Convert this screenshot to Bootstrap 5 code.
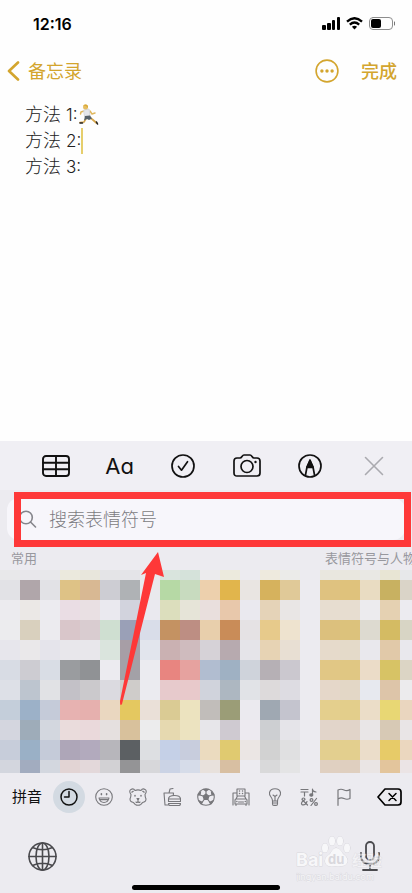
<!DOCTYPE html>
<html lang="zh-CN">
<head>
<meta charset="utf-8">
<meta name="viewport" content="width=device-width, initial-scale=1">
<title>备忘录</title>
<link href="https://cdn.jsdelivr.net/npm/bootstrap@5.3.0/dist/css/bootstrap.min.css" rel="stylesheet">
<style>
body{font-family:"Inter","Noto Sans CJK SC",sans-serif;background:#ecebf0;color:#333;overflow-x:hidden}
svg{display:block;flex:none;fill:none;stroke:currentColor;stroke-linecap:round;stroke-linejoin:round}
button,a.back{background:none;border:0;padding:0;color:inherit;text-decoration:none}
.phone{min-height:100vh;position:relative;overflow:hidden}
.note{background:#fefefe;height:441px}
.status{height:47px;padding:0 16px 0 33px;color:#000}
.signals{gap:6px}
.clock{font-size:16px;font-weight:600;line-height:20px}
.topbar{height:48px;padding:0 15px 0 7px;color:#d3a52e;font-size:18px}
.finish{font-weight:500;color:#d3a52e;margin-left:22px}
.memo{padding:7px 25px;font-size:18px;line-height:26px;font-weight:300;color:#222}
.memo span{font-size:17px}
.caret{width:2px;height:26px;background:#e6ce6c}
.tools{background:#f0eff4;height:49px;color:#111;padding:0 21px 0 39px}
.tools button{width:34px;display:flex;justify-content:center}
.tools .aa{font-size:22px;line-height:30px;font-feature-settings:"cv11"}
.tools .closer{color:#aaaaaf}
.searchrow{padding:8px 7px 8px 7px}
.searchbox{background:#f7f6fb;border-radius:12px;height:42px;padding-left:11px;gap:11px;color:#85858b}
.searchbox input{border:0;background:none;outline:0;font-size:18px;width:100%;min-width:0;color:#333;padding:0;font-weight:300}
.searchbox input::placeholder{color:#7c7c82;opacity:1}
.heads{height:22px;padding-left:11px;font-size:13px;line-height:20px;color:#98989e;white-space:nowrap;overflow:hidden}
.heads span+span{width:87px}
.mosaic{display:grid;grid-template-columns:repeat(21,20px);grid-template-rows:10px repeat(9,20px) 13px;overflow:hidden}
.cats{height:48px;padding:0 10px 0 12px;color:#77777b}
.cats button{display:flex;justify-content:center;align-items:center}
.groups{margin:0 16px 0 10px}
.groups button{flex:1 1 0}
.cats .ime{font-size:15px;color:#111;line-height:20px}
.recent{width:32px;height:32px;border-radius:50%;background:#d3dae2;color:#111;display:flex;align-items:center;justify-content:center}
.bottom{height:70px;padding:0 29px 0 28px;color:#4a4a4e}
.homebar{width:148px;height:5px;border-radius:3px;background:#000;margin:-6px auto 0}
.frame{position:absolute;left:14px;right:1px;top:492px;height:55px;border:7px solid #fe3838;pointer-events:none}
.arrow{position:absolute;left:119px;top:551px;pointer-events:none}
.stamp{position:absolute;right:24px;top:836px;pointer-events:none}
</style>
<script src="https://cdn.jsdelivr.net/npm/bootstrap@5.3.0/dist/js/bootstrap.bundle.min.js"></script>
</head>
<body>
<div class="phone">
<main class="note">
  <div class="status d-flex align-items-center justify-content-between">
    <span class="clock">12:16</span>
    <div class="signals d-flex align-items-center">
      <svg width="18" height="13" stroke="none"><g fill="#000" stroke="none"><rect y="8" width="4" height="5" rx="1"/><rect x="5" y="6" width="4" height="7" rx="1"/><rect x="10" y="3" width="3" height="10" rx="1"/><rect x="15" y="0" width="3" height="13" rx="1"/></g></svg>
      <svg width="17" height="13" viewBox="0 0 17 13" stroke-width="2.3"><path d="M1 4.6Q8.500-2.200 16 4.600M3.800 7.600Q8.500 3.400 13.200 7.600" stroke-linecap="butt"/><path d="M5.900 9.800Q8.500 7.700 11.100 9.800L8.500 12.400Z" fill="#000" stroke="none"/></svg>
      <svg width="27" height="13" viewBox="0 0 27 13"><rect x=".5" y=".5" width="23" height="12" rx="3.500" stroke="#8d8d8d"/><rect x="2" y="2" width="10" height="9" rx="2" fill="#000" stroke="none"/><path d="M25.500 5v3" stroke="#777"/></svg>
    </div>
  </div>
  <div class="topbar d-flex align-items-center">
    <a href="#" class="back d-flex align-items-center gap-2 me-auto"><svg width="13" height="20" viewBox="0 0 13 20" stroke-width="2.600"><path d="M11 1.500 2 10l9 8.500"/></svg>备忘录</a>
    <button aria-label="更多"><svg width="24" height="24" viewBox="0 0 24 24" stroke-width="1.600"><circle cx="12" cy="12" r="10.900"/><g fill="currentColor" stroke="none"><circle cx="6.900" cy="12" r="1.700"/><circle cx="12" cy="12" r="1.700"/><circle cx="17.100" cy="12" r="1.700"/></g></svg></button>
    <button class="finish">完成</button>
  </div>
  <div class="memo">
    <div class="d-flex align-items-center">方法&nbsp;<span>1:</span>
      <svg width="21" height="22" viewBox="0 0 21 22"><path d="m9 13-3 5-4 .5" stroke="#d6a64c" stroke-width="1.600"/><path d="m11 13 3.500 2.500 4 3.500" stroke="#d6a64c" stroke-width="1.800"/><path d="m6 7-3 1-.5 2M12 7l2 3 3-1" stroke="#e0b75e" stroke-width="1.500"/><path d="m6 6 5-1 1 7-5 1Z" fill="#e4e6eb" stroke="#d4d6da"/><path d="m7 12 5-.5 2 3-3 1.500-2-1-3 1.500Z" fill="#56616a" stroke="none"/><circle cx="7.500" cy="3" r="2.500" fill="#e5bd62" stroke="none"/><path d="M5 1.500Q8-.5 10 2v2L8 2Z" fill="#d9a935" stroke="none"/><path d="M2 19h2.500m14-1 1 2" stroke="#222" stroke-width="1.600"/></svg></div>
    <div class="d-flex align-items-center">方法&nbsp;<span>2:</span><i class="caret"></i></div>
    <div class="d-flex align-items-center">方法&nbsp;<span>3:</span></div>
  </div>
</main>
<section>
  <div class="tools d-flex align-items-center justify-content-between">
    <button aria-label="表格"><svg width="28" height="22" viewBox="0 0 28 22" stroke-width="1.900"><rect x="1" y="1" width="26" height="20" rx="3"/><path d="M1 7.700h26M1 14.300h26M14 1v20"/></svg></button>
    <button class="aa">Aa</button>
    <button aria-label="清单"><svg width="24" height="24" viewBox="0 0 24 24" stroke-width="1.700"><circle cx="12" cy="12" r="11"/><path d="m7.500 12.500 3 3.700 6-8.500"/></svg></button>
    <button aria-label="相机"><svg width="28" height="23" viewBox="0 0 28 23" stroke-width="1.700"><path d="M4 4h3c2 0 2-3 4-3h6c2 0 2 3 4 3h3q3 0 3 3v12q0 3-3 3H4q-3 0-3-3V7q0-3 3-3Z"/><circle cx="14" cy="12.500" r="6"/><circle cx="22.500" cy="8" r="1.200" fill="currentColor" stroke="none"/></svg></button>
    <button aria-label="标记"><svg width="24" height="24" viewBox="0 0 24 24" stroke-width="1.700"><circle cx="12" cy="12" r="11"/><path d="m7.500 21 1.500-8 3-6 3 6 1.500 8"/><path d="m12 6 3 7.500H9Z" fill="currentColor"/></svg></button>
    <button class="closer" aria-label="关闭"><svg width="20" height="20" viewBox="0 0 20 20" stroke-width="1.600"><path d="m1.500 1.500 17 17m0-17-17 17"/></svg></button>
  </div>
  <div class="searchrow"><label class="searchbox d-flex align-items-center">
    <svg width="20" height="20" viewBox="0 0 20 20" stroke-width="1.600"><circle cx="8" cy="8.500" r="6.300"/><path d="m12.500 13 5 5"/></svg>
    <input type="text" placeholder="搜索表情符号" aria-label="搜索表情符号"></label></div>
  <div class="heads d-flex justify-content-between"><span>常用</span><span>表情符号与人物</span></div>
  <div class="mosaic" id="mosaic"></div>
  <div class="cats d-flex align-items-center">
    <button class="ime">拼音</button>
    <div class="groups d-flex align-items-center flex-fill">
    <button aria-label="常用"><span class="recent"><svg width="18" height="18" viewBox="0 0 18 18" stroke-width="1.500"><circle cx="9" cy="9" r="8"/><path d="M9 3.500V9H4.500"/></svg></span></button>
    <button aria-label="表情"><svg width="18" height="18" viewBox="0 0 18 18" stroke-width="1.100"><circle cx="9" cy="9" r="8.300"/><path d="M4 10h10q-1 4.500-5 4.500T4 10Zm.7 1.600h8.600"/><path d="M6.400 5.800v.8m5.200-.8v.8" stroke-width="1.600"/></svg></button>
    <button aria-label="动物"><svg width="18" height="18" viewBox="0 0 18 18" stroke-width="1.100"><path d="M2 6.500Q-.5 3 2 1.400 4.500 0 6 2.500q3-1.200 6 0Q13.500 0 16 1.400 18.500 3 16 6.500q0 2 1 4.500 0 3-3.500 3.500Q12 17.300 9 17.300T4.500 14.500Q1 14 1 11q1-2.500 1-4.500ZM3 4.500Q3 3 4.500 3.200M15 4.500Q15 3 13.500 3.200"/><path d="M8 10.500h2L9 12Zm1 1.500v1.500m-2 .5q1 1 2-.3 1 1.300 2 .3"/><path d="M6 7.500v.5m6-.5V8" stroke-width="1.500"/></svg></button>
    <button aria-label="食物"><svg width="18" height="18" viewBox="0 0 18 18" stroke-width="1.100"><path d="M5 17H2L1 5h9.500L10.300 7M6 5l1-4 3-.5M5.500 11q0-3.500 6-3.500t6 3.500ZM5.500 13.500h12M5.500 15.500h12q0 2-1.500 2H7q-1.500 0-1.500-2ZM5.500 11v2.500m12-2.500v2.500"/></svg></button>
    <button aria-label="活动"><svg width="18" height="18" viewBox="0 0 18 18" stroke-width="1.100"><circle cx="9" cy="9" r="8.300"/><path d="m9 6 2.900 2.100-1.100 3.400H7.200L6.100 8.100Z" fill="currentColor"/><path d="M9 6V3M6.100 8.100 3 7m4.200 4.500-2 2.700m5.600-2.700 2 2.700m-.9-6.100L15 7"/><path d="M6.300 1.300 9 3l2.700-1.700ZM1 7l2 0 .7-3.300ZM1.500 12.500l3.700 1.700-1 2Zm15 0-3.700 1.700 1 2ZM17 7h-2l-.7-3.300Z" fill="currentColor"/></svg></button>
    <button aria-label="旅行"><svg width="18" height="18" viewBox="0 0 18 18" stroke-width="1.100"><path d="M1 17V5h4V1h8v4h4v12M5 5v3M13 5v3M4 11l1.500-3h7l1.500 3M3 12q0-1 1-1h10q1 0 1 1v4H3Zm1 4v1.500M14 16v1.500M6.500 14h5"/><path d="M7.500 3h.1m2.900 0h.1M7.500 5.500h.1m2.900 0h.1M4.800 13.500h.1m8.300 0h.1" stroke-width="1.400"/></svg></button>
    <button aria-label="物品"><svg width="18" height="18" viewBox="0 0 18 18" stroke-width="1.100"><path d="M6.500 13q0-2-1.500-4Q3 6.500 3.500 4.500 4.500.7 9 .7t5.500 3.800Q15 6.500 13 9q-1.500 2-1.500 4ZM6.500 13v3q0 1.400 1.400 1.400h2.200q1.400 0 1.400-1.400v-3M6.500 15h5M7 7l2 1.500L11 7M9 8.500V13"/></svg></button>
    <button aria-label="符号"><svg width="18" height="18" viewBox="0 0 18 18" stroke-width="1.200"><path d="M1 1.500h7M1 4h7M4.500 4v4M12.500 7V1q0 2.500 3.500 3"/><ellipse cx="11.300" cy="7" rx="1.500" ry="1.200" fill="currentColor"/><path d="M7.500 17 2 11.500Q2 10 3.500 10T5 11.500L2 14q-1 1.500 0 2.700 3 1.300 5-3.200M16.500 10.500l-5.500 7"/><circle cx="11.500" cy="12" r="1.400"/><circle cx="16" cy="16" r="1.400"/></svg></button>
    <button aria-label="旗帜"><svg width="18" height="18" viewBox="0 0 18 18" stroke-width="1.200"><path d="M3 17.300V2q3-1.500 6 0t6-.5v9q-3 1.500-6 0t-6 .5"/></svg></button>
    </div>
    <button class="text-black" aria-label="删除"><svg width="25" height="18" viewBox="0 0 25 18" stroke-width="1.700"><path d="M8 1h13q3 0 3 3v10q0 3-3 3H8L1 9Z"/><path d="m12 5.500 7 7m0-7-7 7" stroke-width="1.500"/></svg></button>
  </div>
  <div class="bottom d-flex align-items-center justify-content-between">
    <button aria-label="切换键盘"><svg width="29" height="29" viewBox="0 0 29 29" stroke-width="1.600"><circle cx="14.500" cy="14.500" r="13.500"/><ellipse cx="14.500" cy="14.500" rx="6.500" ry="13.500"/><path d="M14.500 1v27M1 14.500h27M4.500 5.500q10 4.500 20 0M4.500 23.500q10-4.500 20 0"/></svg></button>
    <button aria-label="语音输入"><svg width="26" height="32" viewBox="0 0 26 32" stroke-width="1.800"><rect x="9" y="2" width="8" height="18" rx="4"/><path d="M4 13v3q0 8 9 8t9-8v-3M13 24v6M6 30h14"/></svg></button>
  </div>
  <div class="homebar"></div>
</section>
<div class="frame"></div>
<svg class="arrow" width="46" height="155" viewBox="0 0 46 155"><path d="M39 1 45 26 36 23 3 153Q1 156 1 150L27 22 22 24Z" fill="#fe3838" stroke="none"/></svg>
<svg class="stamp" width="92" height="46" viewBox="0 0 92 46"><g fill="#f7f7f9" stroke="#d9d8dd" stroke-width="1" paint-order="stroke" font-family="Inter, Noto Sans CJK SC, sans-serif"><text x="0" y="30" font-size="18" font-weight="700">Bai</text><ellipse cx="29" cy="12" rx="3" ry="4.500"/><ellipse cx="36" cy="5" rx="3" ry="4.500"/><ellipse cx="44" cy="5" rx="3" ry="4.500"/><ellipse cx="51" cy="12" rx="3" ry="4.500"/><path d="M40 12q4 0 7 6 6 4 4 9-2 4-11 3-11 2-11-5 0-4 5-7 3-6 6-6Z"/><text x="32" y="28" font-size="13" font-weight="700" fill="#d9d8dd" stroke="none">du</text><g opacity=".65"><text x="56" y="30" font-size="15" font-weight="500">经验</text></g><text x="0" y="44" font-size="9" opacity=".8">jingyan.baidu.com</text></g></svg>
</div>
<script>
const rows = `e8e8ea e8e7eb e8e8eb ebe9dd e8e6dc e4e4e7 e4e4e8 e9e9ed d9e4dd d5e2da ecebed eceadd ecebf0 eeeade ebebe9 ecebf0 e9e7df e9e7df e9e8e4 e8e5d4 e7e8ea
e2e2e6 b0a6aa e2e2e6 dec286 d8b893 cdcdd3 afb2b5 e9e9ed b6d9a5 c8dbbf edd0ad e1b54c e9e5e2 d6b25d e0c998 ecebf0 dfc280 dfc27c e9dcc2 c8b161 dad4c8
ecebef ebe8e6 ecebf0 eadde4 e9e0e3 eae9ef d2d3dd eae9ef dcdebd e6e4d8 e9dfdd e8c8ab eae9ef e5d3b8 e9e6e5 ecebf0 e7ddd0 e7ddd0 ecebee e5d1b2 ecebf0
ececee d9d0be ecebef d9c6ca d9ccd0 cfdfd1 9aa0b7 d9dde9 c49262 bd8e83 e8cfac c98c58 e5e2e4 e7ca8b eee3cf ecebf0 dcc07d dcc27c dddad0 d4bb63 d8d5c5
e7e6ec eae8ea e5e4eb e8e7eb e8e7eb dae4dd a79ea6 e2e5ed cab1b2 cfbbbe d6d2d7 b7aaaf e5e4e9 e7d3b4 e8dfd3 ecebf0 e6dacb e4dac9 e9e8ed e1c9a9 e9e8ed
d8dce4 cdccd2 d9dde5 9a9c9f 909295 ecebf0 a3a1a7 ebebf0 e88580 e6a29f b1bdd0 9fb1c3 cfd3db b6b0b5 cbc8cf ecebf0 e1c785 e0c783 ebdcc8 d7c365 dcd5c5
dde0e7 bdc5cf e1e2e5 c3c1c7 cbc9cc dbdae0 cfccca ebebf0 e7cacc e8c9cb d0d3dc adb7c1 e1e3e7 dddadb dddce2 ecebf0 e5d7c9 e3d7c6 e7e9ef ddc5a9 ecebed
c4ceda 9cb1c8 c5cbd9 e7b2b1 e6b0ae ead7c0 e4c860 eae0d8 dacb94 ece3bf c1bdba 9b9d77 ebeaef 9fa8b2 c4c4ce ecebf0 e4cf8d e3ce8b ebddc8 e8d774 ead6bf
d4d6df 9eacb9 d3d7df eadcdc ead9db e5e0df d8c19c ececed e6d9b0 ece3c0 e7e6ea cfcad1 edeaf0 cdcfd2 e5e4e9 ecebf0 e2d5ca e1d4c9 e9e6e7 d7c9b5 e9e5e6
c7cdda 9ab0c6 c5cbd9 aea6b8 b2aabd b7b6bb 5c6063 dddfe2 c5d0e7 c8cddd ebdbbf e0ca70 ebe6e4 d2d2d2 e0e0e1 ecebf0 e3cf8f e3cf8e ebddca e7cb68 ebd7bf
d3d6de a2acbf d3d7df e2d4d4 e3d8da d2d1d4 949496 d7d7da cbd3e5 d6dce9 e8e1dc d8bfa2 ecebf0 d9d9da e4e4e5 ecebf0 e0d0c1 dfcfbf eae5e4 e3c59c ebe4e5`;
const mosaic = document.getElementById('mosaic');
rows.split(/\s+/).forEach(c => { const d = document.createElement('div'); d.style.background = '#' + c; mosaic.append(d); });
</script>
</body>
</html>
